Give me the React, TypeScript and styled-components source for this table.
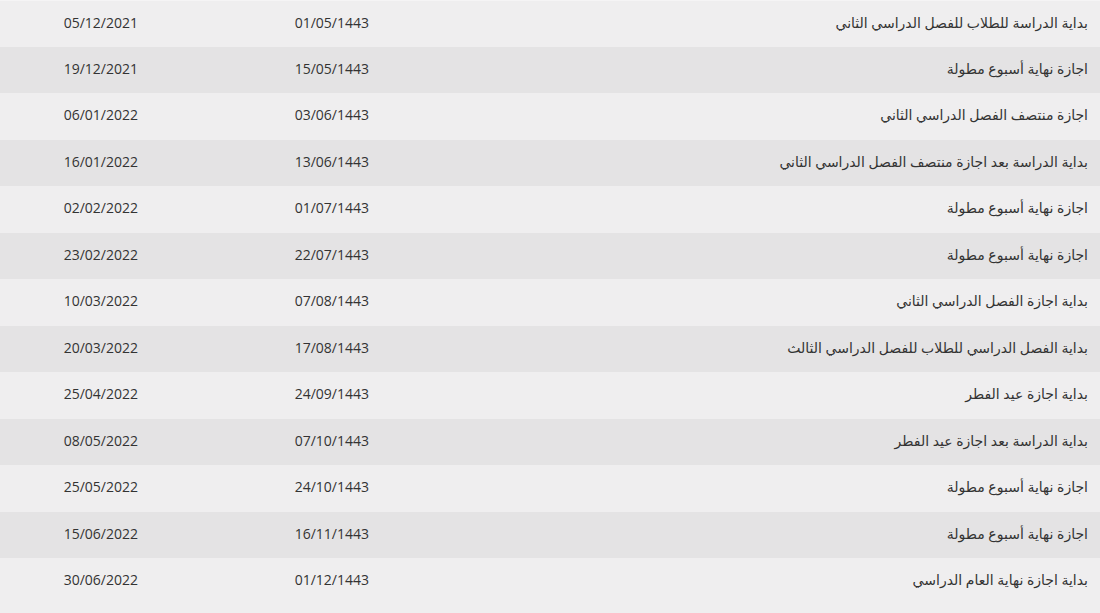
import styled, { createGlobalStyle } from "styled-components";

const GlobalStyle = createGlobalStyle`
  html, body {
    margin: 0;
    padding: 0;
    background: #efeeef;
  }
  body {
    font-family: "Open Sans", "DejaVu Sans", sans-serif;
  }
`;

const Table = styled.div`
  direction: rtl;
  width: 1100px;
`;

const Row = styled.div<{ $alt: boolean }>`
  display: grid;
  grid-template-columns: 719px 231px 150px;
  box-sizing: border-box;
  height: 46.5px;
  align-items: center;
  background: ${(p) => (p.$alt ? "#e4e3e4" : "#efeeef")};

  &:first-child {
    border-top: 1px solid #f5f4f5;
  }
`;

const Cell = styled.div`
  padding: 0 12px 3px;
  font-size: 14px;
  color: #333;
  text-align: right;
  white-space: nowrap;
`;

const DateCell = styled(Cell)`
  direction: ltr;
  text-align: right;
`;

const rows: [string, string, string][] = [
  ["بداية الدراسة للطلاب للفصل الدراسي الثاني", "01/05/1443", "05/12/2021"],
  ["اجازة نهاية أسبوع مطولة", "15/05/1443", "19/12/2021"],
  ["اجازة منتصف الفصل الدراسي الثاني", "03/06/1443", "06/01/2022"],
  ["بداية الدراسة بعد اجازة منتصف الفصل الدراسي الثاني", "13/06/1443", "16/01/2022"],
  ["اجازة نهاية أسبوع مطولة", "01/07/1443", "02/02/2022"],
  ["اجازة نهاية أسبوع مطولة", "22/07/1443", "23/02/2022"],
  ["بداية اجازة الفصل الدراسي الثاني", "07/08/1443", "10/03/2022"],
  ["بداية الفصل الدراسي للطلاب للفصل الدراسي الثالث", "17/08/1443", "20/03/2022"],
  ["بداية اجازة عيد الفطر", "24/09/1443", "25/04/2022"],
  ["بداية الدراسة بعد اجازة عيد الفطر", "07/10/1443", "08/05/2022"],
  ["اجازة نهاية أسبوع مطولة", "24/10/1443", "25/05/2022"],
  ["اجازة نهاية أسبوع مطولة", "16/11/1443", "15/06/2022"],
  ["بداية اجازة نهاية العام الدراسي", "01/12/1443", "30/06/2022"],
];

export default function App() {
  return (
    <>
      <GlobalStyle />
      <Table>
        {rows.map(([event, hijri, greg], i) => (
          <Row key={i} $alt={i % 2 === 1}>
            <Cell>{event}</Cell>
            <DateCell>{hijri}</DateCell>
            <DateCell>{greg}</DateCell>
          </Row>
        ))}
      </Table>
    </>
  );
}
